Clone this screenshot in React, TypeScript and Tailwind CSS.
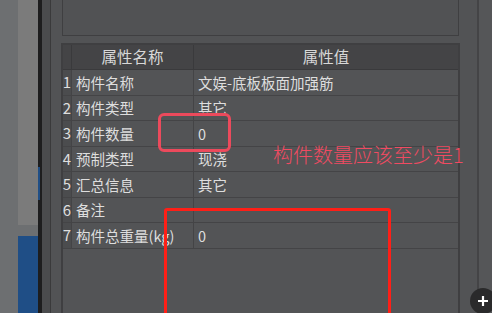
import React from "react";

const rows = [
  { no: 1, name: "构件名称", value: "文娱-底板板面加强筋" },
  { no: 2, name: "构件类型", value: "其它" },
  { no: 3, name: "构件数量", value: "0" },
  { no: 4, name: "预制类型", value: "现浇" },
  { no: 5, name: "汇总信息", value: "其它" },
  { no: 6, name: "备注", value: "" },
  { no: 7, name: "构件总重量(kg)", value: "0" },
];

const font = {
  fontFamily: '"Noto Sans CJK SC", "Noto Sans", sans-serif',
};

const App = () => {
  return (
    <div
      className="relative flex w-[492px] h-[313px] overflow-hidden bg-[#525355] text-[14.5px] text-[#dedede]"
      style={font}
    >
      {/* left side strip from the window behind */}
      <div className="w-[18px] bg-[#6d6f71]" />
      <div className="flex w-[20px] flex-col bg-[#6d6f71]">
        <div className="h-[225px] bg-[#7b7b7b]" />
        <div className="h-[11px]" />
        <div className="flex-1 bg-[#1f4e86]" />
      </div>
      <div className="flex w-[4px] flex-col bg-[#1d1d1e]">
        <div className="h-[167px]" />
        <div className="h-[33px] w-[2px] bg-[#1f4e86]" />
      </div>
      <div className="w-[9px] border-r border-[#3a3a3b] bg-[#4a4b4d]" />

      {/* property panel */}
      <div className="flex w-[426px] flex-col pl-[10px]">
        <div className="ml-[1px] h-[36px] w-[397px] border-x border-b border-[#3f3f41] bg-[#515254]" />
        <div className="mt-[7px] flex w-[399px] flex-1 flex-col border-x-2 border-t-2 border-[#3f3f41] bg-[#535456]">
          <div className="flex h-[25px] border-b border-[#3a3a3c] bg-[#444446] text-[15.5px] text-[#d8d8d8]">
            <div className="w-[9px] border-r border-[#3a3a3c]" />
            <div className="flex w-[122px] items-center justify-center border-r border-[#3a3a3c]">
              属性名称
            </div>
            <div className="flex flex-1 items-center justify-center">属性值</div>
          </div>
          {rows.map((r, i) => (
            <div
              key={r.no}
              className={`flex border-b border-[#444446] ${i % 2 === 0 ? "h-[26px]" : "h-[25px]"}`}
            >
              <div className="flex w-[9px] items-center justify-center border-r border-[#444446] bg-[#4b4c4e] text-[15px]">
                {r.no}
              </div>
              <div className="flex w-[122px] items-center border-r border-[#444446] pl-[4px] whitespace-nowrap">
                {r.name}
              </div>
              <div className="flex flex-1 items-center pl-[4px] whitespace-nowrap">{r.value}</div>
            </div>
          ))}
          <div className="flex-1" />
        </div>
      </div>

      <div className="w-[2px] bg-[#444446]" />
      <div className="flex-1 bg-[#555658]" />

      {/* annotations */}
      <div className="absolute left-[158px] top-[113px] h-[39px] w-[73px] rounded-[6px] border-[3px] border-[#ec4a5c]" />
      <div className="absolute left-[273px] top-[142px] text-[20px] font-light leading-[26px] text-[#f04b62] whitespace-nowrap">
        构件数量应该至少是1
      </div>
      <div className="absolute left-[164px] top-[208px] h-[120px] w-[227px] rounded-[3px] border-[3px] border-[#ff1f17]" />

      <button className="absolute left-[470px] top-[288px] flex h-[26px] w-[26px] items-center justify-center rounded-full bg-[#2a2a2b] text-white">
        <svg width="12" height="12" viewBox="0 0 12 12">
          <path d="M6 1v10M1 6h10" stroke="white" strokeWidth="2.2" />
        </svg>
      </button>
    </div>
  );
};

export default App;
